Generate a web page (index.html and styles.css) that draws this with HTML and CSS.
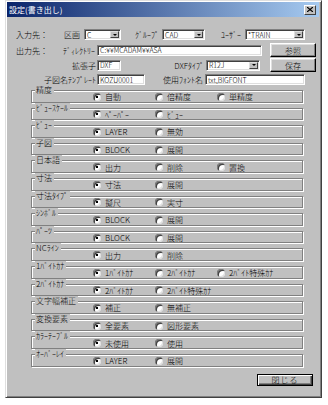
FILE: index.html
```html
<!DOCTYPE html>
<html lang="ja">
<head>
<meta charset="utf-8">
<link rel="stylesheet" href="styles.css">
</head>
<body>
<div class="window">
  <div class="titlebar">
    <span class="title">設定(書き出し)</span>
    <span class="xbtn"><svg width="6" height="5" viewBox="0 0 6 5"><path d="M0 0L6 5M6 0L0 5" stroke="#000" stroke-width="1.2"/></svg></span>
  </div>
  <div class="form">
    <div class="row r1">
      <span class="lbl w48">入力先：</span>
      <span class="lbl w20">区画</span>
      <span class="field combo w37"><span class="val">C</span><span class="dd"><i></i></span></span>
      <span class="lbl right w41 pr3">ｸﾞﾙｰﾌﾟ</span>
      <span class="field combo w43"><span class="val">CAD</span><span class="dd"><i></i></span></span>
      <span class="lbl right w40 pr4">ﾕｰｻﾞｰ</span>
      <span class="field combo w60"><span class="val">*TRAIN</span><span class="dd"><i></i></span></span>
    </div>
    <div class="row r2">
      <span class="lbl w47">出力先：</span>
      <span class="lbl w34">ﾃﾞｨﾚｸﾄﾘｰ</span>
      <span class="field w165"><span class="val">C:¥¥MCADAM¥¥ASA</span></span>
      <span class="btn ml8">参照</span>
    </div>
    <div class="row r3">
      <span class="lbl right w81 pr1">拡張子</span>
      <span class="field w24"><span class="val">DXF</span></span>
      <span class="lbl right w85 pr2">DXFﾀｲﾌﾟ</span>
      <span class="field combo w54"><span class="val">R12J</span><span class="dd"><i></i></span></span>
      <span class="btn ml10">保存</span>
    </div>
    <div class="row r4">
      <span class="lbl right w81 pr1">子図名ﾃﾝﾌﾟﾚｰﾄ</span>
      <span class="field w48f"><span class="val">KOZU0001</span></span>
      <span class="lbl right w60 pr2">使用ﾌｫﾝﾄ名</span>
      <span class="field w100"><span class="val">txt,BIGFONT</span></span>
    </div>
  </div>
  <div class="groups">
    <div class="group"><span class="glbl">精度</span><div class="opts"><span class="opt"><i class="rb on"></i>自動</span><span class="opt"><i class="rb"></i>倍精度</span><span class="opt"><i class="rb"></i>単精度</span></div></div>
    <div class="group"><span class="glbl">ﾋﾞｭｰｽｹｰﾙ</span><div class="opts"><span class="opt"><i class="rb on"></i>ﾍﾟｰﾊﾟｰ</span><span class="opt"><i class="rb"></i>ﾋﾞｭｰ</span></div></div>
    <div class="group"><span class="glbl">ﾋﾞｭｰ</span><div class="opts"><span class="opt"><i class="rb on"></i>LAYER</span><span class="opt"><i class="rb"></i>無効</span></div></div>
    <div class="group"><span class="glbl">子図</span><div class="opts"><span class="opt"><i class="rb on"></i>BLOCK</span><span class="opt"><i class="rb"></i>展開</span></div></div>
    <div class="group"><span class="glbl">日本語</span><div class="opts"><span class="opt"><i class="rb on"></i>出力</span><span class="opt"><i class="rb"></i>削除</span><span class="opt"><i class="rb"></i>置換</span></div></div>
    <div class="group"><span class="glbl">寸法</span><div class="opts"><span class="opt"><i class="rb on"></i>寸法</span><span class="opt"><i class="rb"></i>展開</span></div></div>
    <div class="group"><span class="glbl">寸法ﾀｲﾌﾟ</span><div class="opts"><span class="opt"><i class="rb on"></i>擬尺</span><span class="opt"><i class="rb"></i>実寸</span></div></div>
    <div class="group"><span class="glbl">ｼﾝﾎﾞﾙ</span><div class="opts"><span class="opt"><i class="rb on"></i>BLOCK</span><span class="opt"><i class="rb"></i>展開</span></div></div>
    <div class="group"><span class="glbl">ﾊﾟｰﾂ</span><div class="opts"><span class="opt"><i class="rb on"></i>BLOCK</span><span class="opt"><i class="rb"></i>展開</span></div></div>
    <div class="group"><span class="glbl">NCﾗｲﾝ</span><div class="opts"><span class="opt"><i class="rb on"></i>出力</span><span class="opt"><i class="rb"></i>削除</span></div></div>
    <div class="group"><span class="glbl">1ﾊﾞｲﾄｶﾅ</span><div class="opts"><span class="opt"><i class="rb on"></i>1ﾊﾞｲﾄｶﾅ</span><span class="opt"><i class="rb"></i>2ﾊﾞｲﾄｶﾅ</span><span class="opt"><i class="rb"></i>2ﾊﾞｲﾄ特殊ｶﾅ</span></div></div>
    <div class="group"><span class="glbl">2ﾊﾞｲﾄｶﾅ</span><div class="opts"><span class="opt"><i class="rb on"></i>2ﾊﾞｲﾄｶﾅ</span><span class="opt"><i class="rb"></i>2ﾊﾞｲﾄ特殊ｶﾅ</span></div></div>
    <div class="group"><span class="glbl">文字幅補正</span><div class="opts"><span class="opt"><i class="rb on"></i>補正</span><span class="opt"><i class="rb"></i>無補正</span></div></div>
    <div class="group"><span class="glbl">変換要素</span><div class="opts"><span class="opt"><i class="rb on"></i>全要素</span><span class="opt"><i class="rb"></i>図形要素</span></div></div>
    <div class="group"><span class="glbl">ｶﾗｰﾃｰﾌﾞﾙ</span><div class="opts"><span class="opt"><i class="rb on"></i>未使用</span><span class="opt"><i class="rb"></i>使用</span></div></div>
    <div class="group"><span class="glbl">ｵｰﾊﾞｰﾚｲ</span><div class="opts"><span class="opt"><i class="rb on"></i>LAYER</span><span class="opt"><i class="rb"></i>展開</span></div></div>
  </div>
  <div class="footer">
    <span class="btn btn-default"><span class="focus">閉じる</span></span>
  </div>
</div>
</body>
</html>
```
FILE: styles.css
```css
* { box-sizing: border-box; }
body {
  margin: 0;
  background: #fff;
  font-family: "Noto Sans CJK JP", "Noto Sans", sans-serif;
  font-size: 8px;
  font-weight: 300;
  line-height: 9px;
  color: #000;
}
.window {
  margin-left: 5px;
  width: 317px;
  height: 398px;
  background: #c0c0c0;
  border: 1px solid;
  border-color: #dfdfdf #404040 #404040 #dfdfdf;
  box-shadow: inset 1px 1px 0 #fff, inset -1px -1px 0 #808080;
  padding: 1px 2px 2px 1px;
}
.titlebar {
  height: 15px;
  display: flex;
  align-items: center;
  justify-content: space-between;
  background: linear-gradient(90deg, #0a246a, #a6caf0);
  padding: 0 3px 0 2px;
  color: #fff;
  font-size: 8px;
  font-weight: 400;
}
.xbtn {
  width: 12px;
  height: 10px;
  background: #c0c0c0;
  border: 1px solid;
  border-color: #fff #404040 #404040 #fff;
  display: flex;
  align-items: center;
  justify-content: center;
}
.form { padding-left: 9px; }
.row { display: flex; align-items: center; }
.row > * { flex-shrink: 0; }
.r1 { height: 11px; margin-top: 12px; }
.r2 { height: 14px; margin-top: 3px; }
.r3 { height: 14px; margin-top: 1px; }
.r4 { height: 11px; margin-top: 2px; }
.lbl { white-space: nowrap; }
.right { text-align: right; }
.pr1 { padding-right: 1px; }
.pr2 { padding-right: 2px; }
.pr3 { padding-right: 3px; }
.pr4 { padding-right: 4px; }
.w20 { width: 20px; }
.w24 { width: 24px; }
.w34 { width: 34px; }
.w37 { width: 37px; }
.w40 { width: 40px; }
.w41 { width: 41px; }
.w43 { width: 43px; }
.w47 { width: 47px; }
.w48, .w48f { width: 48px; }
.w54 { width: 54px; }
.w60 { width: 60px; }
.w81 { width: 81px; }
.w85 { width: 85px; }
.w100 { width: 100px; }
.w165 { width: 165px; }
.ml8 { margin-left: 8px; }
.ml10 { margin-left: 10px; }
.field {
  height: 11px;
  background: #fff;
  border: 1px solid;
  border-color: #808080 #fff #fff #808080;
  box-shadow: inset 1px 1px 0 #404040, inset -1px -1px 0 #dfdfdf;
  padding: 1px 1px 1px 2px;
  display: flex;
  align-items: center;
  white-space: nowrap;
  overflow: hidden;
}
.val { font-size: 7px; line-height: 8px; }
.dd {
  margin-left: auto;
  width: 9px;
  height: 7px;
  background: #c0c0c0;
  border: 1px solid;
  border-color: #dfdfdf #404040 #404040 #dfdfdf;
  display: flex;
  align-items: center;
  justify-content: center;
}
.dd i {
  width: 0;
  height: 0;
  border-left: 2px solid transparent;
  border-right: 2px solid transparent;
  border-top: 2px solid #000;
}
.btn {
  width: 46px;
  height: 14px;
  background: #c0c0c0;
  border: 1px solid;
  border-color: #fff #000 #000 #fff;
  box-shadow: inset -1px -1px 0 #808080, inset 1px 1px 0 #dfdfdf;
  display: flex;
  align-items: center;
  justify-content: center;
}
.groups { margin-left: 24px; width: 272px; margin-top: 4px; }
.group {
  display: grid;
  margin-top: 5px;
  height: 12.6px;
  border: 1px solid #808080;
  box-shadow: inset 1px 1px 0 #fff, 1px 1px 0 #fff;
}
.glbl {
  grid-area: 1 / 1;
  align-self: start;
  justify-self: start;
  margin-top: -6px;
  margin-left: 3px;
  padding: 0 2px 0 1px;
  background: #c0c0c0;
  white-space: nowrap;
  line-height: 9px;
}
.opts {
  grid-area: 1 / 1;
  align-self: center;
  display: flex;
  padding-left: 61px;
  margin-top: 1px;
}
.opt {
  width: 62px;
  display: flex;
  align-items: center;
  gap: 4px;
  white-space: nowrap;
}
.rb {
  width: 8px;
  height: 8px;
  border-radius: 50%;
  background: #fff;
  box-shadow: inset 1px 1px 0 #808080, inset 2px 2px 0 #404040, inset -1px -1px 0 #dfdfdf;
  display: flex;
  align-items: center;
  justify-content: center;
}
.rb.on::after {
  content: "";
  width: 2px;
  height: 2px;
  background: #000;
}
.footer { display: flex; justify-content: flex-end; padding-right: 6px; margin-top: 7px; }
.btn-default {
  width: 56px;
  height: 12px;
  border: 1px solid #000;
  box-shadow: inset 1px 1px 0 #fff, inset -1px -1px 0 #404040, inset -2px -2px 0 #808080;
}
.focus { letter-spacing: 1px; }
```
